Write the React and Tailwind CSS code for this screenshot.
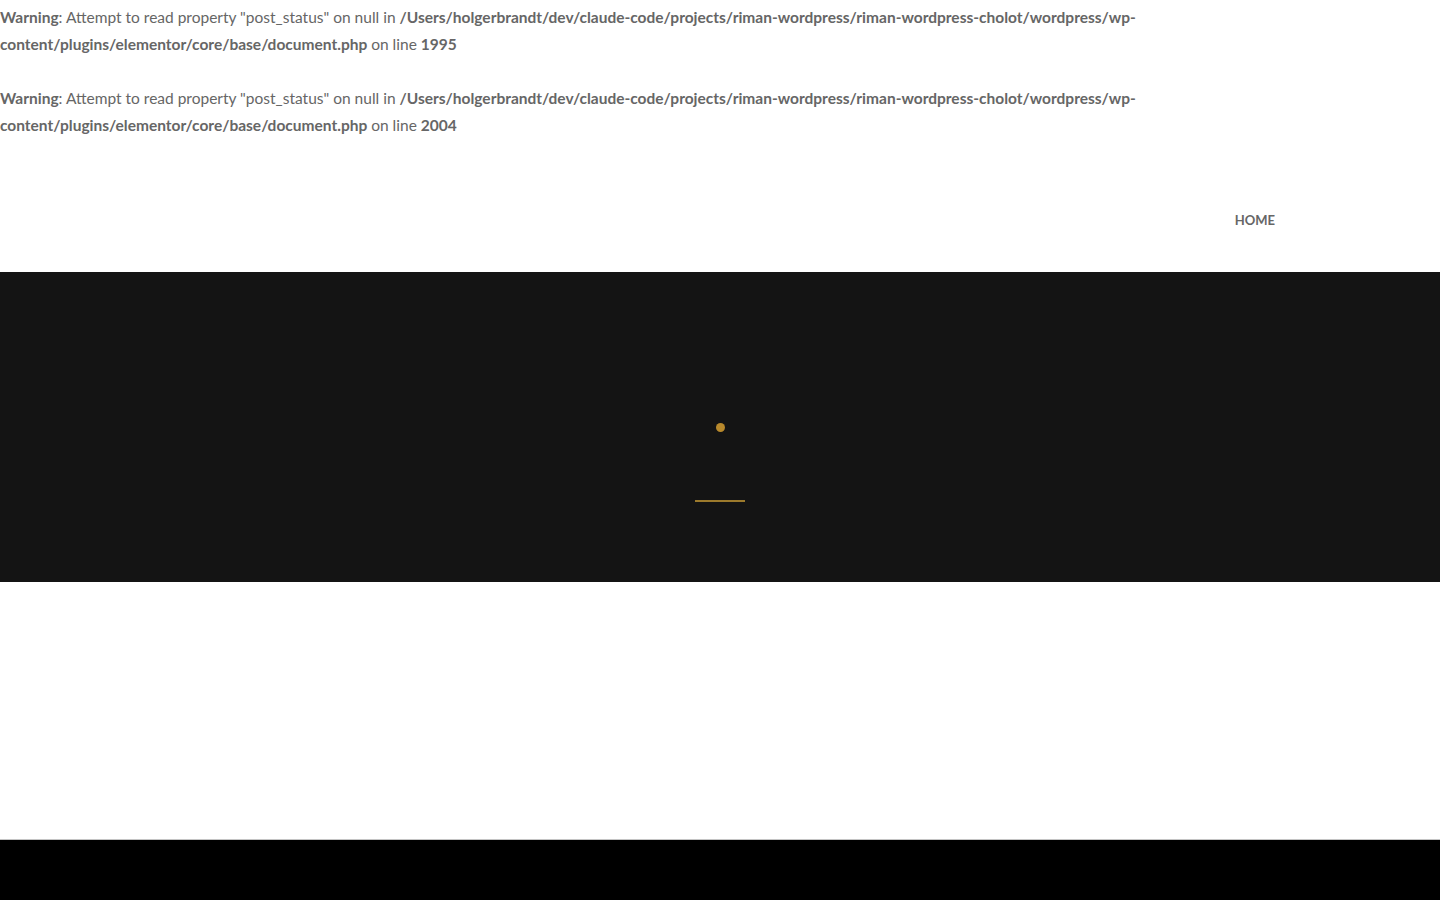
const Warning = ({ line }) => (
  <>
    <br />
    <b>Warning</b>: Attempt to read property "post_status" on null in{' '}
    <b>
      /Users/holgerbrandt/dev/claude-code/projects/riman-wordpress/riman-wordpress-cholot/wordpress/wp-
      <br />
      content/plugins/elementor/core/base/document.php
    </b>{' '}
    on line <b>{line}</b>
    <br />
  </>
);

export default function App() {
  return (
    <div className="min-h-[900px] bg-white font-['Lato','Liberation_Sans',sans-serif] text-[#666]">
      <div className="-mt-[23px] text-[15.5px] leading-[27px] whitespace-nowrap">
        <Warning line="1995" />
        <Warning line="2004" />
      </div>

      <header className="flex h-[133px] items-start justify-end pr-[165px] pt-[72px]">
        <a href="#" className="text-[13px] font-bold leading-[18px] text-[#666]">
          HOME
        </a>
      </header>

      <section className="flex h-[310px] flex-col items-center bg-[#141414]">
        <div className="mt-[151px] h-[9px] w-[9px] rounded-full bg-[#b8892c]" />
        <div className="mt-[68px] h-[2px] w-[50px] bg-[#9c7a2c]" />
      </section>

      <div className="h-[257px]" />

      <footer className="h-[62px] border-y border-[#c4c4c4] bg-black" />
    </div>
  );
}
